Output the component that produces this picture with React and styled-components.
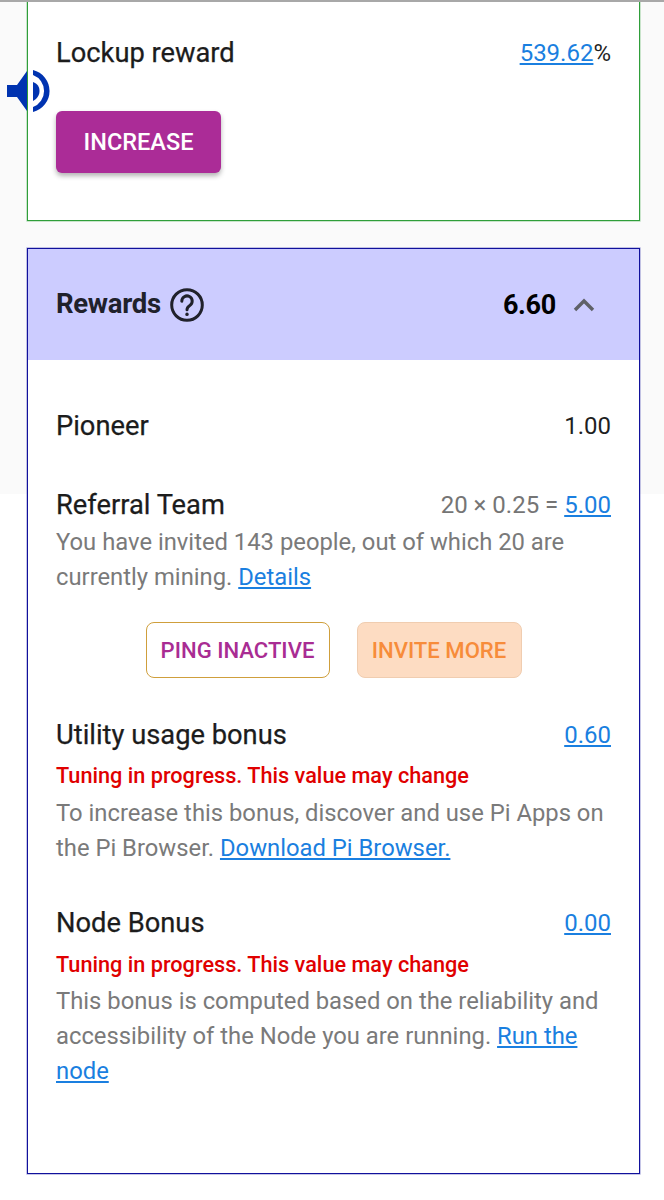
import React from "react";
import styled, { createGlobalStyle } from "styled-components";

const Global = createGlobalStyle`
  html, body { margin: 0; padding: 0; background: #fff; }
  body { font-family: Roboto, "Liberation Sans", sans-serif; }
  * { box-sizing: border-box; }
`;
const Page = styled.div`
  position: relative;
  width: 664px;
  height: 1200px;
  overflow: hidden;
  padding: 0 24px 0 27px;
  border-top: 2px solid #a8a8a8;
  background: linear-gradient(#fafafa 492px, #fff 492px);
`;
const Card = styled.section`
  width: 613px;
  background: #fff;
  border: 1px solid ${(p) => p.$border};
  box-shadow: 0 0 0 0.6px ${(p) => p.$border}66;
`;
const LockupCard = styled(Card)`
  height: 219px;
  border-top: 0;
  padding: 34px 28px 0;
`;
const RewardsCard = styled(Card)`
  height: 926px;
  margin-top: 27px;
`;
const Row = styled.div`
  display: flex;
  justify-content: space-between;
  align-items: flex-start;
`;
const Label = styled.span`
  font-size: 27.3px;
  font-weight: 400;
  line-height: 34px;
  color: #1c1c1c;
  -webkit-text-stroke: 0.25px #1c1c1c;
`;
const Value = styled.span`
  font-size: 24px;
  line-height: 34px;
  color: ${(p) => (p.$muted ? "#757575" : "#1f1f1f")};
`;
const Link = styled.a`
  color: #1a7fe0;
  text-decoration: underline;
`;
const PrimaryButton = styled.button`
  display: block;
  width: 165px;
  height: 62px;
  margin-top: 41px;
  border: 0;
  border-radius: 6px;
  background: #ab2c97;
  color: #fff;
  font: 500 23.5px Roboto, sans-serif;
  box-shadow: 0 3px 5px rgba(0, 0, 0, 0.3);
`;
const Speaker = styled.svg`
  position: absolute;
  left: 7px;
  top: 66px;
`;
const RewardsHeader = styled.header`
  height: 111px;
  display: flex;
  align-items: center;
  justify-content: space-between;
  padding: 0 44px 0 28px;
  background: #ccf;
`;
const HeaderGroup = styled.div`
  display: flex;
  align-items: center;
  gap: ${(p) => p.$gap}px;
`;
const HeaderTitle = styled.h2`
  margin: -3px 0 0;
  font-size: 27.5px;
  font-weight: 700;
  letter-spacing: -0.3px;
  color: #20212b;
`;
const HeaderValue = styled.span`
  font-size: 27px;
  font-weight: 700;
  letter-spacing: -0.3px;
  color: #000;
`;
const Body = styled.div`
  padding: 49px 28px 0;
`;
const Block = styled.div`
  margin-top: ${(p) => p.$top}px;
`;
const Description = styled.p`
  margin: 3px 0 0;
  font-size: 23.8px;
  line-height: 35px;
  color: #7a7a7a;
`;
const Warning = styled.div`
  margin: ${(p) => p.$top}px 0 ${(p) => p.$bottom}px;
  font-size: 21.7px;
  font-weight: 500;
  line-height: 30px;
  color: #e00000;
`;
const ButtonRow = styled.div`
  display: flex;
  justify-content: center;
  gap: 27px;
  margin-top: 26.5px;
`;
const OutlineButton = styled.button`
  height: 56px;
  width: ${(p) => p.$width}px;
  border-radius: 8px;
  border: 1.5px solid ${(p) => p.$border};
  background: ${(p) => p.$bg};
  color: ${(p) => p.$color};
  font: 500 22.1px Roboto, sans-serif;
  padding: 0;
`;

export default function App() {
  return (
    <Page>
      <Global />
      <LockupCard $border="#2f9e3a">
        <Row>
          <Label>Lockup reward</Label>
          <Value><Link>539.62</Link>%</Value>
        </Row>
        <PrimaryButton>INCREASE</PrimaryButton>
      </LockupCard>
      <Speaker width="44" height="46" viewBox="0 0 44 46">
        <path d="M0 17h10L20 3v40L10 29H0z" fill="#0033b0" />
        <path d="M26 14c4.500 1.500 6.500 5 6.500 9s-2 7.500-6.500 10z" fill="#0033b0" />
        <path d="M26 2A21.600 21.600 0 0 1 26 44V39A17.100 17.100 0 0 0 26 7z" fill="#0033b0" />
      </Speaker>
      <RewardsCard $border="#11119c">
        <RewardsHeader>
          <HeaderGroup $gap={9}>
            <HeaderTitle>Rewards</HeaderTitle>
            <svg width="34" height="34" viewBox="0 0 34 34" fill="none" stroke="#20212b" strokeWidth="3" strokeLinecap="round">
              <circle cx="17" cy="17" r="15.300" />
              <path d="M11.800 13.200a5.200 5.200 0 1 1 8 4.300c-2 1.300-2.800 2.200-2.800 4.200" />
              <path d="M17 26.300v.1" strokeWidth="3.400" />
            </svg>
          </HeaderGroup>
          <HeaderGroup $gap={17}>
            <HeaderValue>6.60</HeaderValue>
            <svg width="22" height="14" viewBox="0 0 22 14" fill="none" stroke="#5f6168" strokeWidth="3.400">
              <path d="M2 12l9-9 9 9" />
            </svg>
          </HeaderGroup>
        </RewardsHeader>
        <Body>
          <Row>
            <Label>Pioneer</Label>
            <Value>1.00</Value>
          </Row>
          <Block $top={45}>
            <Row>
              <Label>Referral Team</Label>
              <Value $muted>20 × 0.25 = <Link>5.00</Link></Value>
            </Row>
            <Description>You have invited 143 people, out of which 20 are currently mining. <Link>Details</Link></Description>
          </Block>
          <ButtonRow>
            <OutlineButton $width={184} $border="#cf9f3c" $bg="#fff" $color="#a92c93">PING INACTIVE</OutlineButton>
            <OutlineButton $width={165} $border="#f0cdb0" $bg="#fddcc2" $color="#f78c3a">INVITE MORE</OutlineButton>
          </ButtonRow>
          <Block $top={40}>
            <Row>
              <Label>Utility usage bonus</Label>
              <Value><Link>0.60</Link></Value>
            </Row>
            <Warning $top={9} $bottom={5}>Tuning in progress. This value may change</Warning>
            <Description>To increase this bonus, discover and use Pi Apps on the Pi Browser. <Link>Download Pi Browser.</Link></Description>
          </Block>
          <Block $top={40}>
            <Row>
              <Label>Node Bonus</Label>
              <Value><Link>0.00</Link></Value>
            </Row>
            <Warning $top={10.5} $bottom={4}>Tuning in progress. This value may change</Warning>
            <Description>This bonus is computed based on the reliability and accessibility of the Node you are running. <Link>Run the node</Link></Description>
          </Block>
        </Body>
      </RewardsCard>
    </Page>
  );
}
